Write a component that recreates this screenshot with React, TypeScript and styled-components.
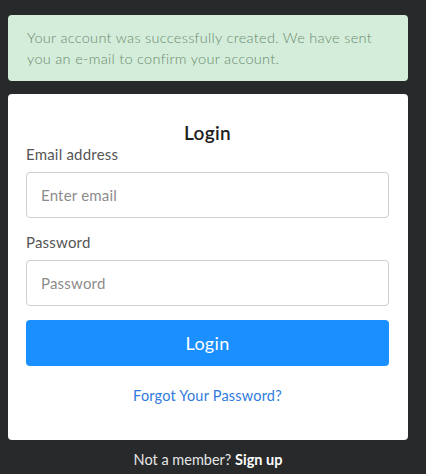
import styled, { createGlobalStyle } from "styled-components";

const GlobalStyle = createGlobalStyle`
  html, body {
    margin: 0;
    padding: 0;
    background: #27292b;
  }

  body {
    font-family: Lato, "Open Sans", sans-serif;
  }

  * {
    box-sizing: border-box;
  }
`;

const Page = styled.main`
  width: 400px;
  margin-left: 8px;
  padding-top: 15px;
  display: flex;
  flex-direction: column;
`;

const Alert = styled.div`
  background: #d4edda;
  border-radius: 4px;
  padding: 12px 19px;
  color: #6b8a6f;
  font-size: 14.5px;
  letter-spacing: 0.3px;
  line-height: 21px;
  font-weight: 300;
`;

const Card = styled.section`
  margin-top: 13px;
  background: #fff;
  border-radius: 4px;
  padding: 27px 19px 34px 18px;
  display: flex;
  flex-direction: column;
`;

const Title = styled.h2`
  margin: 0;
  text-align: center;
  font-size: 19px;
  line-height: 24px;
  font-weight: 600;
  letter-spacing: 0.3px;
  color: #222;
`;

const Label = styled.label<{ $gap?: number }>`
  display: block;
  margin-top: ${(p) => p.$gap ?? 0}px;
  font-size: 15px;
  letter-spacing: 0.2px;
  line-height: 18px;
  color: #555;
`;

const Input = styled.input`
  display: block;
  width: 100%;
  height: 46px;
  margin-top: 9px;
  padding: 0 14px;
  border: 1px solid #cfcfcf;
  border-radius: 4px;
  font-family: inherit;
  font-size: 15px;
  letter-spacing: 0.2px;
  color: #333;
  outline: none;

  &::placeholder {
    color: #8c8c8c;
  }
`;

const Button = styled.button`
  margin-top: 14px;
  height: 46px;
  width: 100%;
  border: none;
  border-radius: 4px;
  background: #1a8fff;
  color: #fff;
  font-family: inherit;
  font-size: 18px;
  letter-spacing: 0.3px;
  cursor: pointer;
`;

const Forgot = styled.a`
  margin-top: 20px;
  align-self: center;
  font-size: 14.5px;
  letter-spacing: 0.2px;
  line-height: 20px;
  color: #2e7bdc;
  text-decoration: none;
`;

const Footer = styled.p`
  margin: 10px 0 0;
  text-align: center;
  font-size: 14.5px;
  line-height: 20px;
  color: #e6e6e6;

  strong {
    color: #fff;
    font-weight: 700;
  }
`;

export default function App() {
  return (
    <>
      <GlobalStyle />
      <Page>
        <Alert>
          Your account was successfully created. We have sent you an e-mail to
          confirm your account.
        </Alert>

        <Card>
          <Title>Login</Title>
          <Label htmlFor="email">Email address</Label>
          <Input id="email" type="email" placeholder="Enter email" />
          <Label htmlFor="password" $gap={15}>
            Password
          </Label>
          <Input id="password" type="password" placeholder="Password" />
          <Button type="button">Login</Button>
          <Forgot href="#">Forgot Your Password?</Forgot>
        </Card>

        <Footer>
          Not a member? <strong>Sign up</strong>
        </Footer>
      </Page>
    </>
  );
}
